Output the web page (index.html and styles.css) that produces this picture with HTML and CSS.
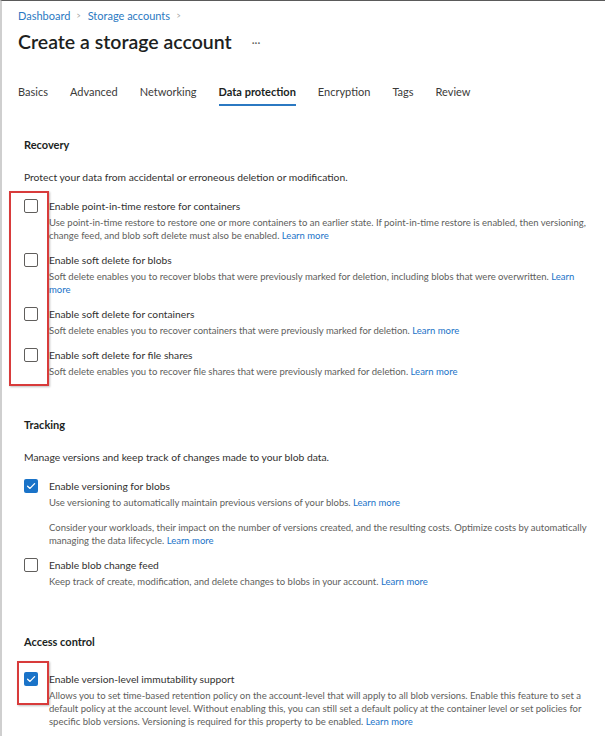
FILE: index.html
```html
<!DOCTYPE html>
<html lang="en">
<head>
<meta charset="utf-8">
<title>Create a storage account</title>
<link rel="stylesheet" href="styles.css">
</head>
<body>
<div class="page">
  <header class="header">
    <nav class="breadcrumb">
      <a href="#">Dashboard</a><span class="chev">&gt;</span><a href="#">Storage accounts</a><span class="chev">&gt;</span>
    </nav>
    <div class="title-row">
      <h1 class="title">Create a storage account</h1>
      <span class="more">···</span>
    </div>
    <ul class="tabs">
      <li class="tab">Basics</li>
      <li class="tab">Advanced</li>
      <li class="tab">Networking</li>
      <li class="tab active">Data protection</li>
      <li class="tab">Encryption</li>
      <li class="tab">Tags</li>
      <li class="tab">Review</li>
    </ul>
  </header>

  <main class="content">
    <section class="section recovery">
      <h2 class="heading">Recovery</h2>
      <p class="intro">Protect your data from accidental or erroneous deletion or modification.</p>
      <div class="items">
        <div class="item">
          <span class="cb"></span>
          <div class="text">
            <div class="label">Enable point-in-time restore for containers</div>
            <p class="desc">Use point-in-time restore to restore one or more containers to an earlier state. If point-in-time restore is enabled, then versioning, change feed, and blob soft delete must also be enabled. <a href="#">Learn more</a></p>
          </div>
        </div>
        <div class="item">
          <span class="cb"></span>
          <div class="text">
            <div class="label">Enable soft delete for blobs</div>
            <p class="desc">Soft delete enables you to recover blobs that were previously marked for deletion, including blobs that were overwritten. <a href="#">Learn more</a></p>
          </div>
        </div>
        <div class="item">
          <span class="cb"></span>
          <div class="text">
            <div class="label">Enable soft delete for containers</div>
            <p class="desc">Soft delete enables you to recover containers that were previously marked for deletion. <a href="#">Learn more</a></p>
          </div>
        </div>
        <div class="item">
          <span class="cb"></span>
          <div class="text">
            <div class="label">Enable soft delete for file shares</div>
            <p class="desc">Soft delete enables you to recover file shares that were previously marked for deletion. <a href="#">Learn more</a></p>
          </div>
        </div>
      </div>
      <div class="mark mark-recovery"></div>
    </section>

    <section class="section tracking">
      <h2 class="heading">Tracking</h2>
      <p class="intro">Manage versions and keep track of changes made to your blob data.</p>
      <div class="items">
        <div class="item">
          <span class="cb checked"><svg viewBox="0 0 14 14" width="14" height="14"><path d="M3.6 7.2 L6 9.4 L10.6 4.6" fill="none" stroke="#fff" stroke-width="1.3" stroke-linecap="round" stroke-linejoin="round"/></svg></span>
          <div class="text">
            <div class="label">Enable versioning for blobs</div>
            <p class="desc">Use versioning to automatically maintain previous versions of your blobs. <a href="#">Learn more</a></p>
            <p class="desc note">Consider your workloads, their impact on the number of versions created, and the resulting costs. Optimize costs by automatically managing the data lifecycle. <a href="#">Learn more</a></p>
          </div>
        </div>
        <div class="item">
          <span class="cb"></span>
          <div class="text">
            <div class="label">Enable blob change feed</div>
            <p class="desc">Keep track of create, modification, and delete changes to blobs in your account. <a href="#">Learn more</a></p>
          </div>
        </div>
      </div>
    </section>

    <section class="section access">
      <h2 class="heading">Access control</h2>
      <div class="items">
        <div class="item">
          <span class="cb checked"><svg viewBox="0 0 14 14" width="14" height="14"><path d="M3.6 7.2 L6 9.4 L10.6 4.6" fill="none" stroke="#fff" stroke-width="1.3" stroke-linecap="round" stroke-linejoin="round"/></svg></span>
          <div class="text">
            <div class="label">Enable version-level immutability support</div>
            <p class="desc">Allows you to set time-based retention policy on the account-level that will apply to all blob versions. Enable this feature to set a default policy at the account level. Without enabling this, you can still set a default policy at the container level or set policies for specific blob versions. Versioning is required for this property to be enabled. <a href="#">Learn more</a></p>
          </div>
        </div>
      </div>
      <div class="mark mark-access"></div>
    </section>
  </main>
</div>
</body>
</html>
```
FILE: styles.css
```css
* { box-sizing: border-box; }
html, body { margin: 0; padding: 0; background: #fff; }
body {
  font-family: "Lato", "Open Sans", sans-serif;
  color: #323130;
}
a { color: #1a73c8; text-decoration: none; }
p { margin: 0; }
h1, h2 { margin: 0; }
ul { margin: 0; padding: 0; list-style: none; }

.page {
  position: relative;
  width: 605px;
  height: 736px;
  overflow: hidden;
  border-top: 1px solid #5a5a5a;
  border-left: 2px solid #cfcfcf;
}

.header { padding-left: 16px; }

.breadcrumb {
  padding-top: 8px;
  font-size: 11px;
  line-height: 14px;
  display: flex;
  align-items: center;
}
.breadcrumb a { color: #2b79c2; }
.breadcrumb .chev {
  color: #a19f9d;
  font-size: 9px;
  margin: 0 6px 0 6px;
  transform: scaleX(0.8);
}

.title-row {
  display: flex;
  align-items: center;
  margin-top: 7px;
  height: 24px;
}
.title {
  font-size: 19.5px;
  font-weight: 600;
  line-height: 24px;
  color: #201f1e;
}
.more {
  margin-left: 20px;
  font-size: 11px;
  color: #605e5c;
}

.tabs {
  display: flex;
  margin-top: 31px;
  font-size: 11px;
  line-height: 14px;
}
.tab {
  margin-right: 22px;
  color: #3b3a39;
  padding-bottom: 5px;
  border-bottom: 2px solid transparent;
}
.tab.active {
  font-weight: 700;
  color: #201f1e;
  border-bottom-color: #2b79c2;
}

.content { padding-left: 22px; padding-right: 10px; }

.section { position: relative; }
.heading {
  font-size: 11px;
  font-weight: 700;
  line-height: 16px;
  color: #201f1e;
}
.intro {
  font-size: 10.3px;
  line-height: 14px;
  color: #323130;
  margin-top: 17px;
}
.items { margin-top: 15px; display: flex; flex-direction: column; gap: 11px; }

.item { display: flex; align-items: flex-start; }
.cb {
  flex: none;
  width: 14px;
  height: 14px;
  border: 1px solid #605e5c;
  border-radius: 2px;
  background: #fff;
  display: block;
}
.cb.checked {
  border: none;
  background: #1a73c8;
}
.cb svg { display: block; }

.text { margin-left: 11px; flex: 1; }
.label {
  font-size: 10.25px;
  line-height: 14px;
  color: #323130;
  margin-bottom: 3px;
}
.desc {
  font-size: 9.5px;
  line-height: 13px;
  color: #605e5c;
}
.desc.note { margin-top: 12px; }

.recovery { margin-top: 31px; }
.tracking { margin-top: 39px; }
.access { margin-top: 46px; }
.access .items { margin-top: 22px; }

.mark {
  position: absolute;
  border: 2px solid #d83b3b;
  box-shadow: 1px 1px 2px rgba(0,0,0,0.25);
}
.mark-recovery { left: -15px; top: 54px; width: 40px; height: 195px; }
.mark-access { left: -7px; top: 27px; width: 32px; height: 44px; }
```
